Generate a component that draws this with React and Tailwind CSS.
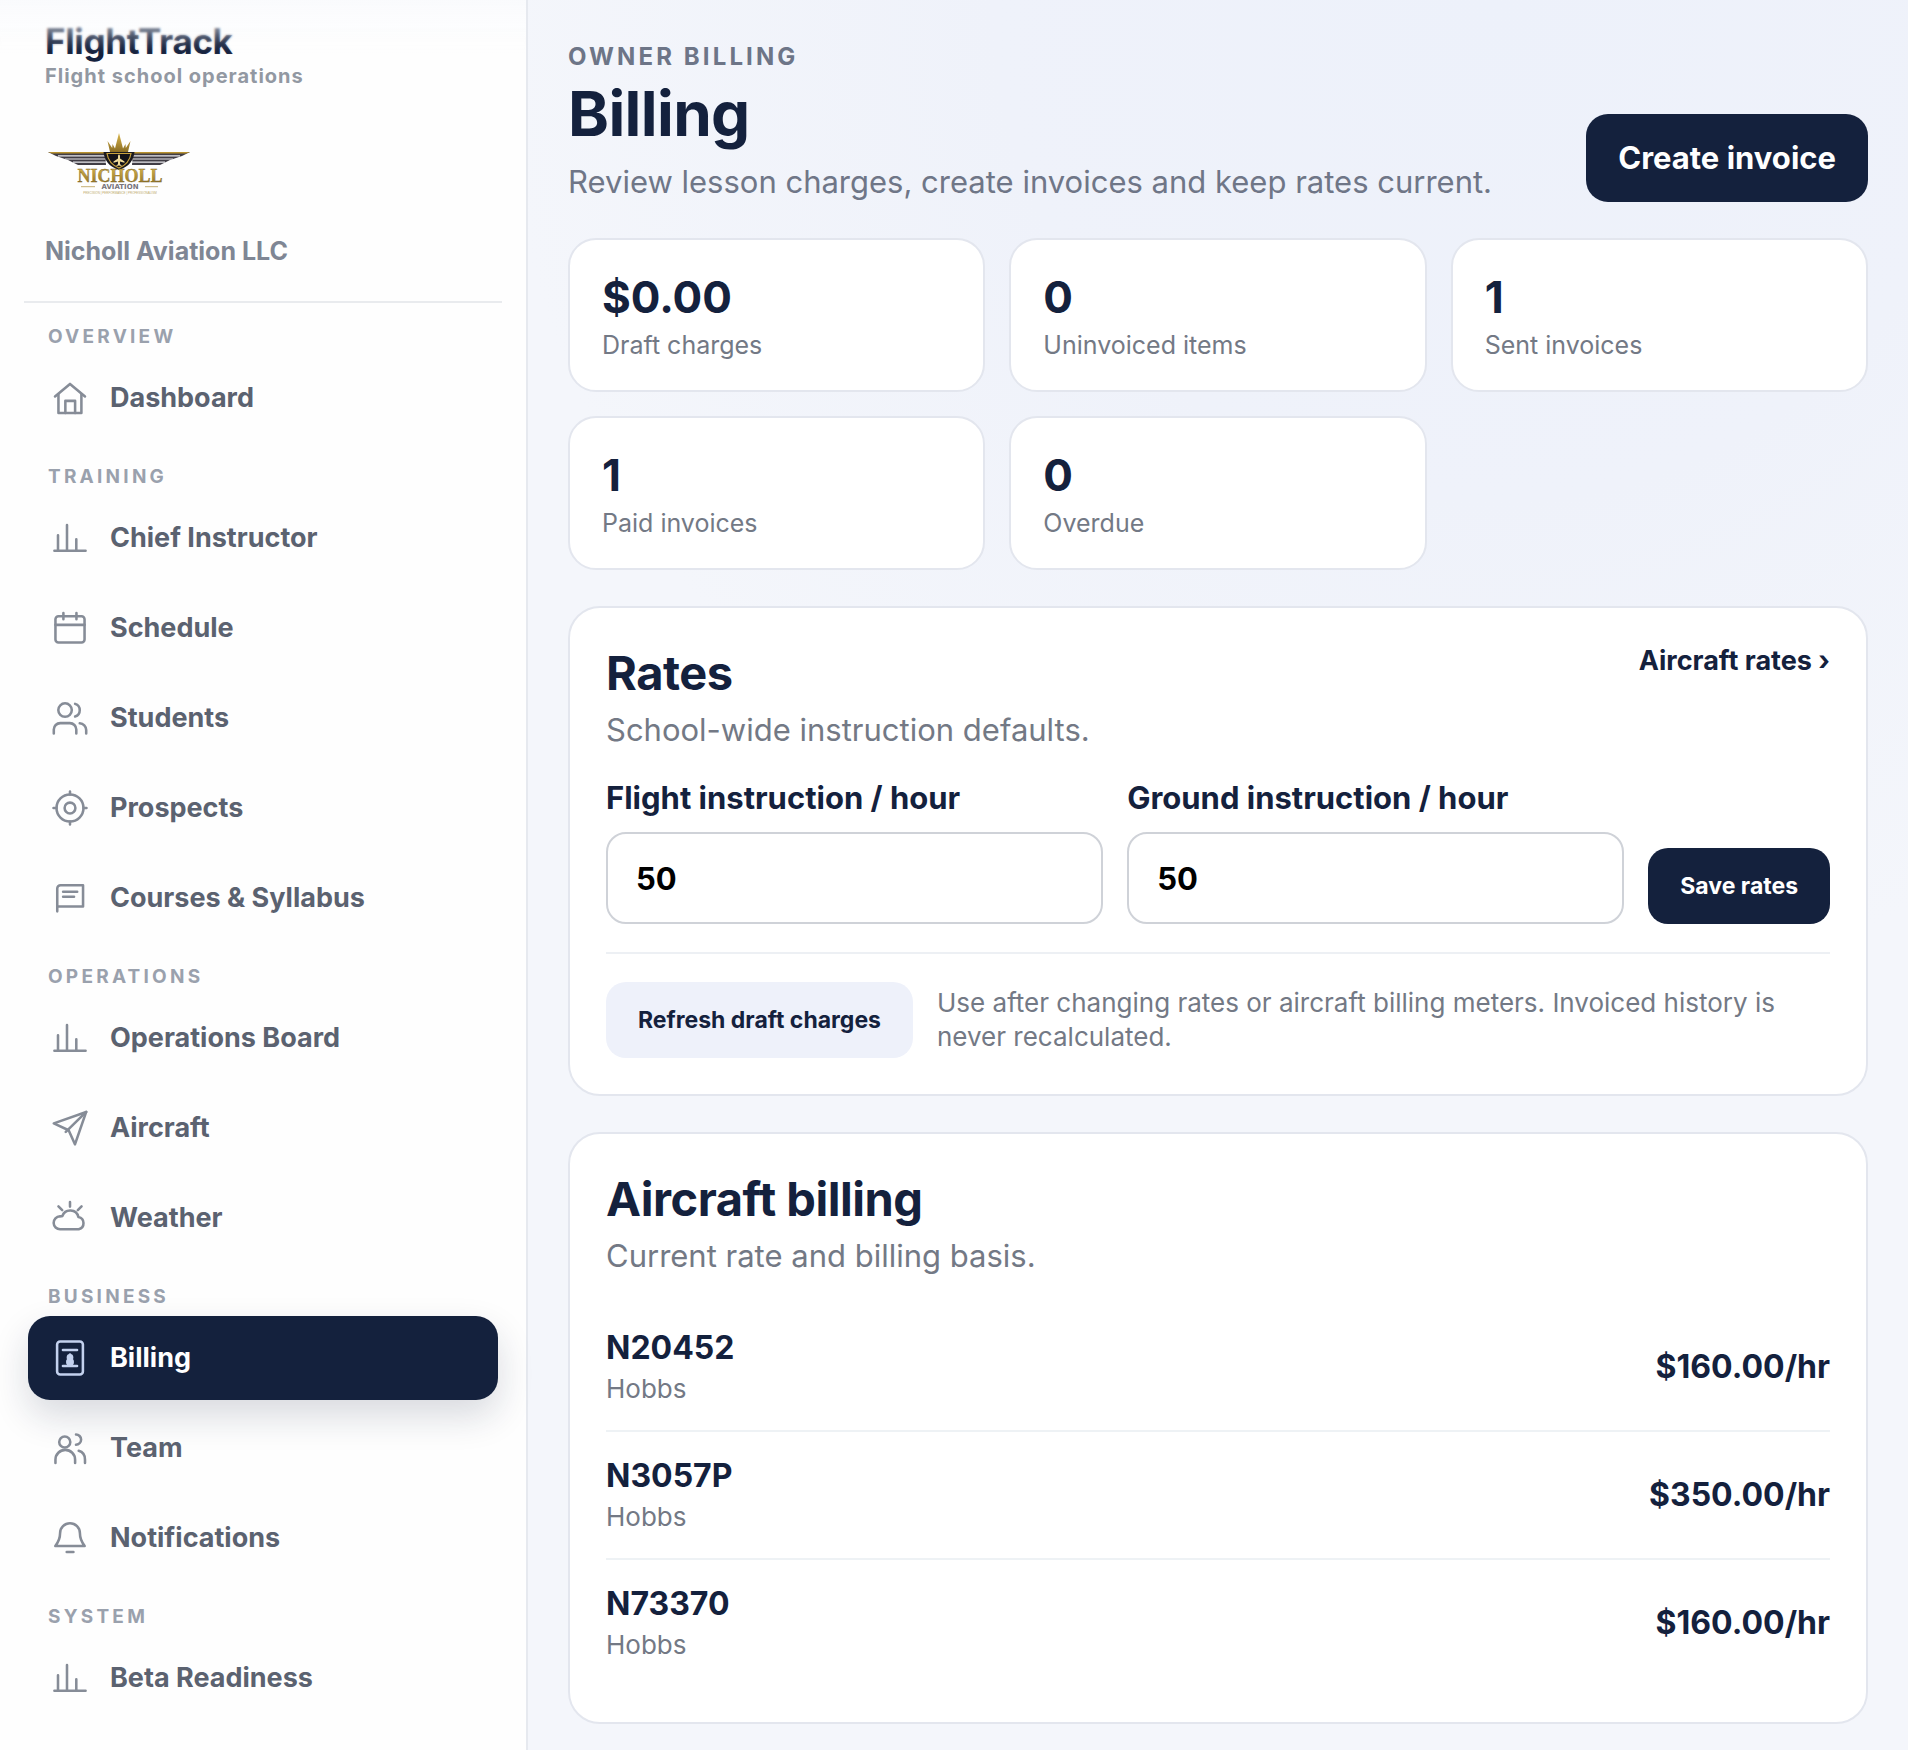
import React, { useState } from "react";
import clsx from "clsx";

const icons = {
  home: (
    <>
      <path d="M2 11 12 2.6 22 11" />
      <path d="M4.3 9.5V22h15.3V9.5" />
      <path d="M8.9 22v-8.1h6.5V22" />
    </>
  ),
  chart: <path d="M1.6 20.5h20.8M4 20.5V10.2M10 20.5V3.4M16.2 20.5v-7.6" />,
  calendar: (
    <>
      <rect x="2.3" y="4.2" width="19.4" height="17.4" rx="2" />
      <path d="M2.3 9.9h19.4M7.6 2v4.2M16.3 2v4.2" />
    </>
  ),
  students: (
    <>
      <circle cx="8.7" cy="6.7" r="4.5" />
      <path d="M15.4 2.6a4.4 4.4 0 0 1 0 8.4" />
      <path d="M1.2 22.3v-2.6a4.3 4.3 0 0 1 4.3-4.3h6.4a4.3 4.3 0 0 1 4.3 4.3v2.6" />
      <path d="M18.5 15.5a4.6 4.6 0 0 1 4.3 4.5v2.3" />
    </>
  ),
  target: (
    <>
      <circle cx="12" cy="12" r="9" />
      <circle cx="12" cy="12" r="3.6" />
      <path d="M12 1v2M12 21v2M1 12h2M21 12h2" />
    </>
  ),
  book: (
    <>
      <path d="M3.5 20.9V5.7a2.2 2.2 0 0 1 2.2-2.2h15v14.2H3.700" />
      <path d="M7.4 7.8h9.4M7.4 11.1h7.3" />
    </>
  ),
  plane: (
    <>
      <path d="M22.8 1.3 1.2 8.9l9.9 4.6 4.2 9.4z" />
      <path d="M22.8 1.3 9.2 14.6" />
    </>
  ),
  weather: (
    <>
      <path d="M5.5 19.5a4.3 4.3 0 0 1-.2-8.6c.7 0 1.2 0 1.6-.2a5.6 5.6 0 0 1 10.7.6 4.2 4.2 0 0 1 .2 8.2z" />
      <path d="M12 1.4v3M4.3 4.3 6.8 6.8M19.7 4.3l-2.5 2.5" />
    </>
  ),
  invoice: (
    <>
      <rect x="3.4" y="1" width="17.2" height="22" rx="2" />
      <path d="M7.3 6.7h9.4M7.3 17.3h9.4" />
      <circle cx="12" cy="11.6" r="1.4" fill="currentColor" />
      <circle cx="12" cy="14.6" r="1.8" fill="currentColor" />
      <path d="M12 9.7v7" />
    </>
  ),
  team: (
    <>
      <circle cx="8.5" cy="8" r="3.7" />
      <path d="M16 3a3.4 3.4 0 0 1 0 6.8" />
      <path d="M2.3 22v-2.2a6.5 6.5 0 0 1 13.1 0V22" />
      <path d="M17.8 13.9c2.6.7 4.2 3 4.2 5.9V22" />
    </>
  ),
  bell: (
    <>
      <path d="M2.2 17.3h19.6c-2.3-2.8-3.2-5-3.2-8.6a6.6 6.6 0 0 0-13.2 0c0 3.6-.9 5.8-3.2 8.6z" />
      <path d="M9.8 21.3h4.5" />
    </>
  ),
};

const navGroups = [
  {
    title: "Overview",
    items: [{ label: "Dashboard", icon: "home" }],
  },
  {
    title: "Training",
    items: [
      { label: "Chief Instructor", icon: "chart" },
      { label: "Schedule", icon: "calendar" },
      { label: "Students", icon: "students" },
      { label: "Prospects", icon: "target" },
      { label: "Courses & Syllabus", icon: "book" },
    ],
  },
  {
    title: "Operations",
    items: [
      { label: "Operations Board", icon: "chart" },
      { label: "Aircraft", icon: "plane" },
      { label: "Weather", icon: "weather" },
    ],
  },
  {
    title: "Business",
    items: [
      { label: "Billing", icon: "invoice", active: true },
      { label: "Team", icon: "team" },
      { label: "Notifications", icon: "bell" },
    ],
  },
  {
    title: "System",
    items: [{ label: "Beta Readiness", icon: "chart" }],
  },
];

const stats = [
  { value: "$0.00", label: "Draft charges" },
  { value: "0", label: "Uninvoiced items" },
  { value: "1", label: "Sent invoices" },
  { value: "1", label: "Paid invoices" },
  { value: "0", label: "Overdue" },
];

const aircraft = [
  { tail: "N20452", basis: "Hobbs", rate: "$160.00/hr" },
  { tail: "N3057P", basis: "Hobbs", rate: "$350.00/hr" },
  { tail: "N73370", basis: "Hobbs", rate: "$160.00/hr" },
];

const NavIcon = ({ name, className }) => (
  <svg
    viewBox="0 0 24 24"
    className={clsx("size-9 shrink-0", className)}
    fill="none"
    stroke="currentColor"
    strokeWidth="1.7"
    strokeLinecap="round"
    strokeLinejoin="round"
    aria-hidden="true"
  >
    {icons[name]}
  </svg>
);

const SchoolLogo = () => (
  <svg viewBox="0 0 142 64" className="h-16 w-[142px]" role="img" aria-label="Nicholl Aviation">
    <defs>
      <linearGradient id="gold" x1="0" y1="0" x2="0" y2="1">
        <stop offset="0" stopColor="#dcb84c" />
        <stop offset="1" stopColor="#8a6d24" />
      </linearGradient>
    </defs>
    {/* wings */}
    <g id="wing">
      <path d="M0 19h57l1 13H30L20 27 8 23z" fill="#403d45" />
      <path d="M0 19h57v1.5H4z" fill="#b8922f" />
      <path d="M10 22.8h47M17 26h40M25 29.2h33" stroke="#e8e8ec" strokeWidth="1.2" />
    </g>
    <use href="#wing" transform="matrix(-1 0 0 1 142 0)" />
    {/* crown */}
    <path
      d="M62 19 59.5 8l4.7 7 .3-4 2.5 4.5L71 0l4 15.5 2.5-4.500.3 4L82.5 8 80 19z"
      fill="url(#gold)"
    />
    {/* shield */}
    <path d="M55.5 19h31c-1 8-5 14.5-15.5 18-10.5-3.5-14.5-10-15.5-18z" fill="#1b1a1e" />
    <path
      d="M59 20.5h24c-1 6.5-4.5 11.5-12 14.5-7.5-3-11-8-12-14.5z"
      fill="#141318"
      stroke="#c9a23c"
      strokeWidth="1.2"
    />
    <path
      d="M71 21.5c.8 0 1 1 1 2v2l4.5 3v1.2L72 28.5v2.7l1.5 1v.9L71 32.5l-2.5.6v-.9l1.5-1v-2.7l-4.5 1.2v-1.2l4.5-3v-2c0-1 .2-2 1-2z"
      fill="#f0dc9a"
    />
    <text
      x="72"
      y="49"
      textAnchor="middle"
      fill="url(#gold)"
      stroke="#7a6226"
      strokeWidth="0.3"
      className="font-['Liberation_Serif',serif] text-[18px] font-bold"
    >
      NICHOLL
    </text>
    <text
      x="72"
      y="56"
      textAnchor="middle"
      fill="#77747c"
      className="font-['DejaVu_Sans',sans-serif] text-[7px] font-bold"
    >
      AVIATION
    </text>
    <path d="M33 53.7h14M97 53.7h13" stroke="#b59a52" strokeWidth="0.8" />
    <text
      x="72"
      y="61"
      textAnchor="middle"
      fill="#c0ab6c"
      className="font-['Liberation_Sans',sans-serif] text-[3px]"
    >
      PRECISION | PERFORMANCE | PROFESSIONALISM
    </text>
  </svg>
);

const Sidebar = () => (
  <aside className="relative w-[528px] shrink-0 border-r-2 border-[#e6e9ef] bg-[#fefefe] px-6 pt-5 pb-6">
    <div className="border-b-2 border-[#e9ebee] px-[21px] pb-[34px]">
      <p className="text-[35px] leading-[42px] font-bold tracking-[-0.01em] text-[#14213d]">
        FlightTrack
      </p>
      <p className="text-xl leading-7 font-bold tracking-wider text-[#9298a2]">
        Flight school operations
      </p>
      <div className="mt-[43px] pl-[3px]">
        <SchoolLogo />
      </div>
      <p className="mt-[38px] text-[25px] leading-8 font-bold text-[#7f8694]">
        Nicholl Aviation LLC
      </p>
    </div>

    <nav className="flex flex-col gap-[26px] px-1 pt-[23px]">
      {navGroups.map((group) => (
        <div key={group.title}>
          <h2 className="mb-2 px-5 text-[19px] leading-[22px] font-bold tracking-[0.17em] text-[#9aa1ad] uppercase">
            {group.title}
          </h2>
          <ul className="flex flex-col gap-1.5">
            {group.items.map((item) => (
              <li key={item.label}>
                <a
                  href="#"
                  aria-current={item.active ? "page" : undefined}
                  className={clsx(
                    "flex h-[84px] items-center gap-[22px] rounded-[22px] px-6 text-[27px] font-bold",
                    item.active
                      ? "bg-[#14213d] text-white shadow-[0_16px_36px_rgba(20,33,61,0.16)]"
                      : "text-[#5b6270]"
                  )}
                >
                  <NavIcon
                    name={item.icon}
                    className={item.active ? "text-[#c3d1ee]" : "text-[#868c97]"}
                  />
                  {item.label}
                </a>
              </li>
            ))}
          </ul>
        </div>
      ))}
    </nav>

    <div className="pointer-events-none absolute inset-x-0 top-0 h-[56px] bg-linear-to-b from-[#fafbfd] to-transparent mask-b-from-50% backdrop-blur-[1px]" />
  </aside>
);

const StatCard = ({ value, label }) => (
  <div className="rounded-[28px] border-2 border-[#e3e6ee] bg-white px-8 pt-[31px] pb-[29px]">
    <p className="text-[44px] leading-[52px] font-bold text-[#14213d]">{value}</p>
    <p className="mt-1.5 text-[25px] leading-8 text-[#737985]">{label}</p>
  </div>
);

const Panel = ({ title, subtitle, action, children }) => (
  <section className="rounded-[32px] border-2 border-[#e3e6ee] bg-white p-9">
    <div className="mb-7 flex items-start justify-between">
      <div>
        <h2 className="text-[47px] leading-[58px] font-bold tracking-[-0.01em] text-[#14213d]">
          {title}
        </h2>
        <p className="mt-2 text-[31px] leading-10 text-[#737985]">{subtitle}</p>
      </div>
      {action}
    </div>
    {children}
  </section>
);

const RateField = ({ id, label, value, onChange }) => (
  <div className="min-w-0 flex-1">
    <label htmlFor={id} className="block text-[31px] leading-10 font-bold text-[#14213d]">
      {label}
    </label>
    <input
      id={id}
      type="text"
      inputMode="decimal"
      value={value}
      onChange={(e) => onChange(e.target.value)}
      className="mt-3.5 h-[92px] w-full rounded-[20px] border-2 border-[#cfd2d8] bg-white px-7 text-[31px] font-bold text-black"
    />
  </div>
);

const App = () => {
  const [flightRate, setFlightRate] = useState("50");
  const [groundRate, setGroundRate] = useState("50");

  return (
    <div className="flex min-h-screen bg-[#f4f6fb] font-['Inter',sans-serif]">
      <Sidebar />

      <main className="flex min-w-0 flex-1 flex-col gap-9 bg-[radial-gradient(circle_at_70%_0%,#edf1fa_0%,#eff2fa_25%,#f4f6fb_50%)] px-10 pt-10 pb-6">
        <header className="flex items-end justify-between gap-6">
          <div>
            <p className="text-2xl leading-[34px] font-bold tracking-[0.13em] text-[#6d7587] uppercase">
              Owner billing
            </p>
            <h1 className="text-[62px] leading-[80px] font-bold tracking-[-0.01em] text-[#14213d]">
              Billing
            </h1>
            <p className="mt-2 text-[31px] leading-10 text-[#6f7687]">
              Review lesson charges, create invoices and keep rates current.
            </p>
          </div>
          <button
            type="button"
            className="h-[88px] shrink-0 rounded-[22px] bg-[#14213d] px-8 text-[31px] font-bold text-white"
          >
            Create invoice
          </button>
        </header>

        <div className="grid grid-cols-3 gap-6">
          {stats.map((stat) => (
            <StatCard key={stat.label} value={stat.value} label={stat.label} />
          ))}
        </div>

        <Panel
          title="Rates"
          subtitle="School-wide instruction defaults."
          action={
            <a href="#" className="text-[27px] leading-[34px] font-bold text-[#14213d]">
              Aircraft rates ›
            </a>
          }
        >
          <form
            className="flex items-end gap-6 border-b-2 border-[#edf0f4] pb-7"
            onSubmit={(e) => e.preventDefault()}
          >
            <RateField
              id="flight-rate"
              label="Flight instruction / hour"
              value={flightRate}
              onChange={setFlightRate}
            />
            <RateField
              id="ground-rate"
              label="Ground instruction / hour"
              value={groundRate}
              onChange={setGroundRate}
            />
            <button
              type="submit"
              className="h-[76px] shrink-0 rounded-[20px] bg-[#14213d] px-8 text-[23px] font-bold text-white"
            >
              Save rates
            </button>
          </form>
          <div className="flex items-center gap-6 pt-7">
            <button
              type="button"
              className="h-[76px] shrink-0 rounded-[20px] bg-[#eef1fa] px-8 text-[23px] font-bold text-[#14213d]"
            >
              Refresh draft charges
            </button>
            <p className="text-[26px] leading-[34px] text-[#737985]">
              Use after changing rates or aircraft billing meters. Invoiced history is never
              recalculated.
            </p>
          </div>
        </Panel>

        <Panel title="Aircraft billing" subtitle="Current rate and billing basis.">
          <ul className="divide-y-2 divide-[#eef2f5]">
            {aircraft.map((plane) => (
              <li key={plane.tail} className="flex items-center justify-between py-6">
                <div>
                  <p className="text-[32px] leading-10 font-bold text-[#14213d]">{plane.tail}</p>
                  <p className="mt-1 text-[26px] leading-[34px] text-[#737985]">{plane.basis}</p>
                </div>
                <p className="text-[32px] leading-10 font-bold text-[#14213d]">{plane.rate}</p>
              </li>
            ))}
          </ul>
        </Panel>
      </main>
    </div>
  );
};

export default App;
